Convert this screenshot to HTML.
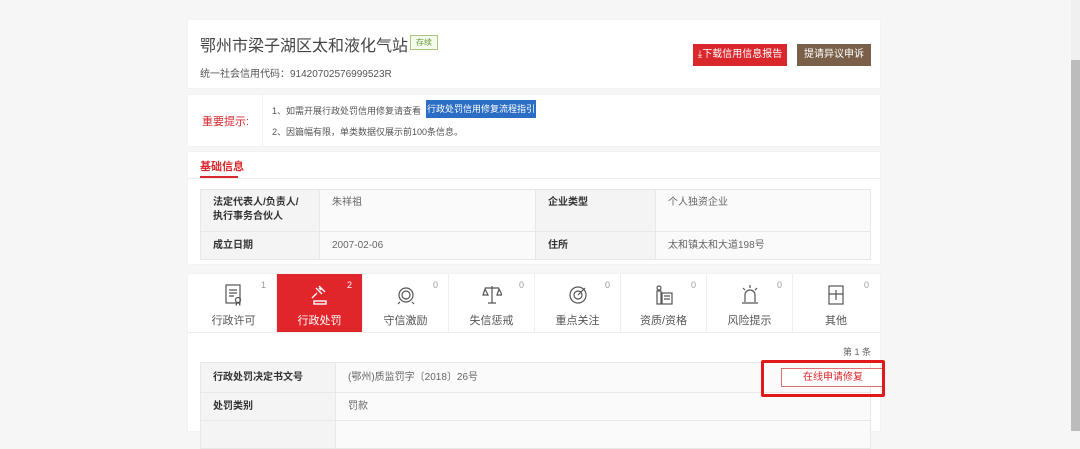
<!DOCTYPE html>
<html><head><meta charset="utf-8"><style>
*{margin:0;padding:0;box-sizing:border-box}
body{width:1080px;height:431px;overflow:hidden;background:#f6f6f6;font-family:"Liberation Sans","Noto Sans CJK SC",sans-serif;color:#333;position:relative}
.card{position:absolute;left:188px;width:692px;background:#fff;box-shadow:0 0 2px rgba(0,0,0,.06)}
.abs{position:absolute}
table{border-collapse:collapse;position:absolute;font-size:10px;table-layout:fixed;line-height:14px}
td{border:1px solid #e8e8e8;padding:0 12px;vertical-align:top;overflow:hidden;white-space:nowrap}
td.h{background:#f4f4f4;color:#333;font-weight:bold}
td.v{background:#fafafa;color:#666}
.tab{position:absolute;top:0;width:86px;height:58px;text-align:center;font-size:11px;color:#555;border-right:1px solid #eee}
.tab .n{position:absolute;right:10px;top:6px;font-size:9px;color:#999}
.tab svg{position:absolute;left:33px;top:10px}
.tab .t{position:absolute;left:0;right:0;top:38px}
</style></head><body>
<div class="card" style="top:20px;height:68px">
 <div class="abs" style="left:12px;top:12px;font-size:16px;color:#444;white-space:nowrap">鄂州市梁子湖区太和液化气站</div>
 <div class="abs" style="left:222px;top:15px;font-size:8px;color:#6a9a3a;border:1px solid #a6c77d;padding:1px 5px;background:#f5faee">存续</div>
 <div class="abs" style="left:12px;top:45px;font-size:10px;color:#555">统一社会信用代码：91420702576999523R</div>
 <div class="abs" style="left:505px;top:24px;width:94px;height:22px;background:#d9272c;color:#fff;font-size:10px;line-height:22px;text-align:center">⤓下载信用信息报告</div>
 <div class="abs" style="left:609px;top:24px;width:74px;height:22px;background:#7a6048;color:#fff;font-size:10px;line-height:22px;text-align:center">提请异议申诉</div>
</div>
<div class="card" style="top:95px;height:51px">
 <div class="abs" style="left:14px;top:18px;font-size:11px;color:#d9272c">重要提示:</div>
 <div class="abs" style="left:74px;top:0;width:1px;height:51px;background:#eee"></div>
 <div class="abs" style="left:84px;top:9px;font-size:9px;color:#555">1、如需开展行政处罚信用修复请查看</div>
 <div class="abs" style="left:238px;top:5px;width:110px;height:18px;background:#2b6cc4;color:#fff;font-size:9px;line-height:18px;text-align:center">行政处罚信用修复流程指引</div>
 <div class="abs" style="left:84px;top:30px;font-size:9px;color:#555">2、因篇幅有限，单类数据仅展示前100条信息。</div>
</div>
<div class="card" style="top:152px;height:112px">
 <div class="abs" style="left:12px;top:6px;font-size:11px;color:#d9272c;font-weight:bold">基础信息</div>
 <div class="abs" style="left:12px;top:24px;width:38px;height:2px;background:#d9272c"></div>
 <div class="abs" style="left:0;top:26px;width:692px;height:1px;background:#eee"></div>
 <table style="left:12px;top:37px;width:671px">
  <colgroup><col style="width:119px"><col style="width:216px"><col style="width:120px"><col></colgroup>
  <tr style="height:42px"><td class="h" style="padding-top:6px">法定代表人/负责人/<br>执行事务合伙人</td><td class="v" style="padding-top:6px">朱祥祖</td><td class="h" style="padding-top:6px">企业类型</td><td class="v" style="padding-top:6px">个人独资企业</td></tr>
  <tr style="height:28px"><td class="h" style="vertical-align:middle">成立日期</td><td class="v" style="vertical-align:middle">2007-02-06</td><td class="h" style="vertical-align:middle">住所</td><td class="v" style="vertical-align:middle">太和镇太和大道198号</td></tr>
 </table>
</div>
<div class="card" style="top:274px;height:157px">
 <div class="abs" style="left:3px;top:0;width:686px;height:58px">
  <div class="tab" style="left:0"><svg width="20" height="22" viewBox="0 0 20 22" fill="none" stroke="#555" stroke-width="1.2"><rect x="2" y="1" width="14" height="18"/><path d="M5 6h8M5 9h8M5 12h5"/><circle cx="14" cy="16" r="2.5"/><path d="M13 18.5l-1 3M15 18.5l1 3"/></svg><span class="n">1</span><div class="t">行政许可</div></div>
  <div class="tab" style="left:86px;background:#e0262b;color:#fff"><svg width="20" height="22" viewBox="0 0 20 22" fill="none" stroke="#fff" stroke-width="1.4"><path d="M6 4l6 6M9 2l6 6M7 9l-5 5M11 6l-2 -2"/><rect x="4" y="17" width="12" height="3"/></svg><span class="n" style="color:#fff">2</span><div class="t">行政处罚</div></div>
  <div class="tab" style="left:172px"><svg width="20" height="22" viewBox="0 0 20 22" fill="none" stroke="#555" stroke-width="1.2"><circle cx="10" cy="11" r="7"/><circle cx="10" cy="11" r="4"/><path d="M4 18l-2 2M16 18l2 2"/></svg><span class="n">0</span><div class="t">守信激励</div></div>
  <div class="tab" style="left:258px"><svg width="20" height="22" viewBox="0 0 20 22" fill="none" stroke="#555" stroke-width="1.2"><path d="M10 2v17M3 4h14M6 19h8M3 5l-2 6h5zM17 5l-2 6h5z"/></svg><span class="n">0</span><div class="t">失信惩戒</div></div>
  <div class="tab" style="left:344px"><svg width="20" height="22" viewBox="0 0 20 22" fill="none" stroke="#555" stroke-width="1.2"><circle cx="10" cy="11" r="8"/><circle cx="10" cy="11" r="4"/><path d="M10 11l7 -7"/></svg><span class="n">0</span><div class="t">重点关注</div></div>
  <div class="tab" style="left:430px"><svg width="20" height="22" viewBox="0 0 20 22" fill="none" stroke="#555" stroke-width="1.2"><circle cx="5" cy="4" r="2"/><rect x="3" y="7" width="4" height="13"/><rect x="8" y="9" width="10" height="11"/><path d="M10 12h6M10 15h6"/></svg><span class="n">0</span><div class="t">资质/资格</div></div>
  <div class="tab" style="left:516px"><svg width="20" height="22" viewBox="0 0 20 22" fill="none" stroke="#555" stroke-width="1.2"><path d="M5 18v-7a5 5 0 0110 0v7M2 19h16M10 1v3M3 4l2 2M17 4l-2 2"/></svg><span class="n">0</span><div class="t">风险提示</div></div>
  <div class="tab" style="left:602px;border-right:none"><svg width="20" height="22" viewBox="0 0 20 22" fill="none" stroke="#555" stroke-width="1.2"><rect x="3" y="2" width="14" height="18"/><path d="M3 10h14M10 6v10"/></svg><span class="n">0</span><div class="t">其他</div></div>
 </div>
 <div class="abs" style="left:0;top:58px;width:692px;height:1px;background:#eee"></div>
 <div class="abs" style="left:655px;top:71px;font-size:9px;color:#666">第 1 条</div>
 <table style="left:12px;top:88px;width:671px">
  <colgroup><col style="width:135px"><col></colgroup>
  <tr style="height:30px"><td class="h" style="vertical-align:middle">行政处罚决定书文号</td><td class="v" style="vertical-align:middle">(鄂州)质监罚字〔2018〕26号</td></tr>
  <tr style="height:28px"><td class="h" style="vertical-align:middle">处罚类别</td><td class="v" style="vertical-align:middle">罚款</td></tr>
  <tr style="height:28px"><td class="h"></td><td class="v"></td></tr>
 </table>
 <div class="abs" style="left:593px;top:94px;width:104px;height:19px;border:1px solid #e07070;background:#fff;color:#d9272c;font-size:10px;line-height:17px;text-align:center">在线申请修复</div>
 <div class="abs" style="left:573px;top:86px;width:124px;height:37px;border:3px solid #e01a1a;border-radius:2px"></div>
</div>
<div class="abs" style="left:1071px;top:0;width:9px;height:60px;background:#f0f0f0"></div>
<div class="abs" style="left:1071px;top:60px;width:9px;height:371px;background:#bcbcbc"></div>
</body></html>
